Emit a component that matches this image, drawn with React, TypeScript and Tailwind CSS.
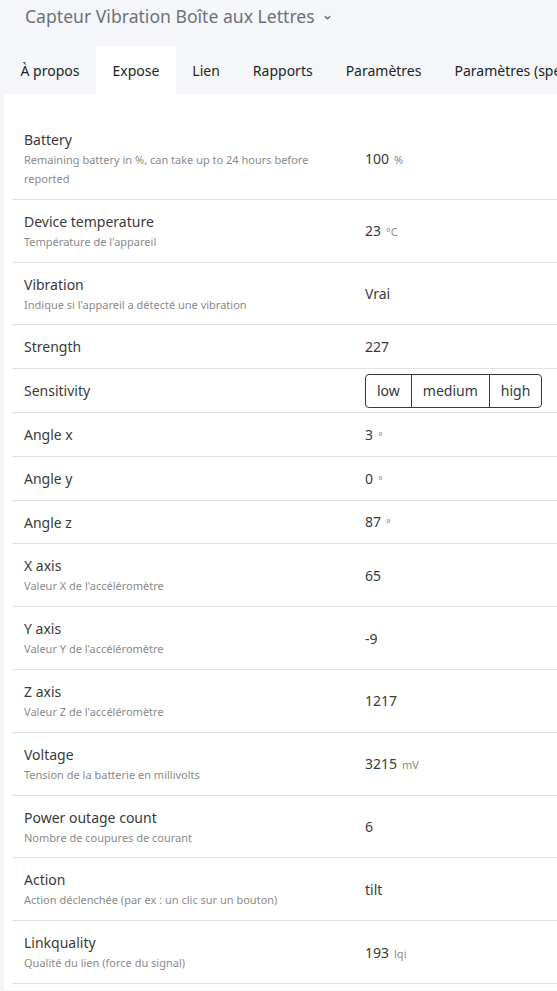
const rows: { label: string; desc?: string; value?: string; unit?: string; toggle?: boolean }[] = [
  { label: "Battery", desc: "Remaining battery in %, can take up to 24 hours before reported", value: "100", unit: "%" },
  { label: "Device temperature", desc: "Température de l'appareil", value: "23", unit: "°C" },
  { label: "Vibration", desc: "Indique si l'appareil a détecté une vibration", value: "Vrai" },
  { label: "Strength", value: "227" },
  { label: "Sensitivity", toggle: true },
  { label: "Angle x", value: "3", unit: "°" },
  { label: "Angle y", value: "0", unit: "°" },
  { label: "Angle z", value: "87", unit: "°" },
  { label: "X axis", desc: "Valeur X de l'accéléromètre", value: "65" },
  { label: "Y axis", desc: "Valeur Y de l'accéléromètre", value: "-9" },
  { label: "Z axis", desc: "Valeur Z de l'accéléromètre", value: "1217" },
  { label: "Voltage", desc: "Tension de la batterie en millivolts", value: "3215", unit: "mV" },
  { label: "Power outage count", desc: "Nombre de coupures de courant", value: "6" },
  { label: "Action", desc: "Action déclenchée (par ex : un clic sur un bouton)", value: "tilt" },
  { label: "Linkquality", desc: "Qualité du lien (force du signal)", value: "193", unit: "lqi" },
];

const tabs = ["À propos", "Expose", "Lien", "Rapports", "Paramètres", "Paramètres (spécifiques)"];

export default function App() {
  return (
    <div
      className="min-h-screen w-[557px] overflow-hidden bg-[#f5f6f9] text-[#3a3a3a]"
      style={{ fontFamily: '"Noto Sans", "Open Sans", sans-serif' }}
    >
      <div className="flex items-center gap-[8px] px-[25px] pt-[2px] h-[31px]">
        <span className="text-[17.6px] text-[#6c727a]">Capteur Vibration Boîte aux Lettres</span>
        <svg width="9" height="9" viewBox="0 0 10 10" className="mt-[2px]">
          <path d="M2 3.5 L5 6.5 L8 3.5" fill="none" stroke="#6c727a" strokeWidth="1.6" />
        </svg>
      </div>
      <div className="flex mt-[15px] h-[48px] whitespace-nowrap pl-[4px]">
        {tabs.map((t) => (
          <div
            key={t}
            className={`flex items-center px-[16.5px] text-[14px] text-[#212529] ${
              t === "Expose" ? "bg-white rounded-t-[4px]" : ""
            }`}
          >
            {t}
          </div>
        ))}
      </div>
      <div className="ml-[4px] w-[700px] bg-white pt-[24px] pl-[8px] pb-[6px]">
        <div className="border-b border-[#dee2e6]">
          {rows.map((r) => (
            <div key={r.label} className="flex items-center border-b border-[#dee2e6] last:border-b-0">
              <div className="w-[341px] shrink-0 px-[12px] pt-[11px] pb-[10.8px]">
                <div className="text-[14px] leading-[21px] text-[#3a3a3a]">{r.label}</div>
                {r.desc && <div className="text-[11px] leading-[19px] text-[#8a8a8a]">{r.desc}</div>}
              </div>
              <div className="px-[12px] text-[14px] text-[#3a3a3a]">
                {r.toggle ? (
                  <div className="flex h-[34px] rounded-[4px] border border-[#343a40] text-[14px] text-[#343a40]">
                    <span className="flex items-center px-[11px]">low</span>
                    <span className="flex items-center border-l border-[#343a40] px-[11px]">medium</span>
                    <span className="flex items-center border-l border-[#343a40] px-[11px]">high</span>
                  </div>
                ) : (
                  <span>
                    {r.value}
                    {r.unit && <span className="ml-[5px] text-[11px] text-[#8a8a8a]">{r.unit}</span>}
                  </span>
                )}
              </div>
            </div>
          ))}
        </div>
      </div>
    </div>
  );
}
